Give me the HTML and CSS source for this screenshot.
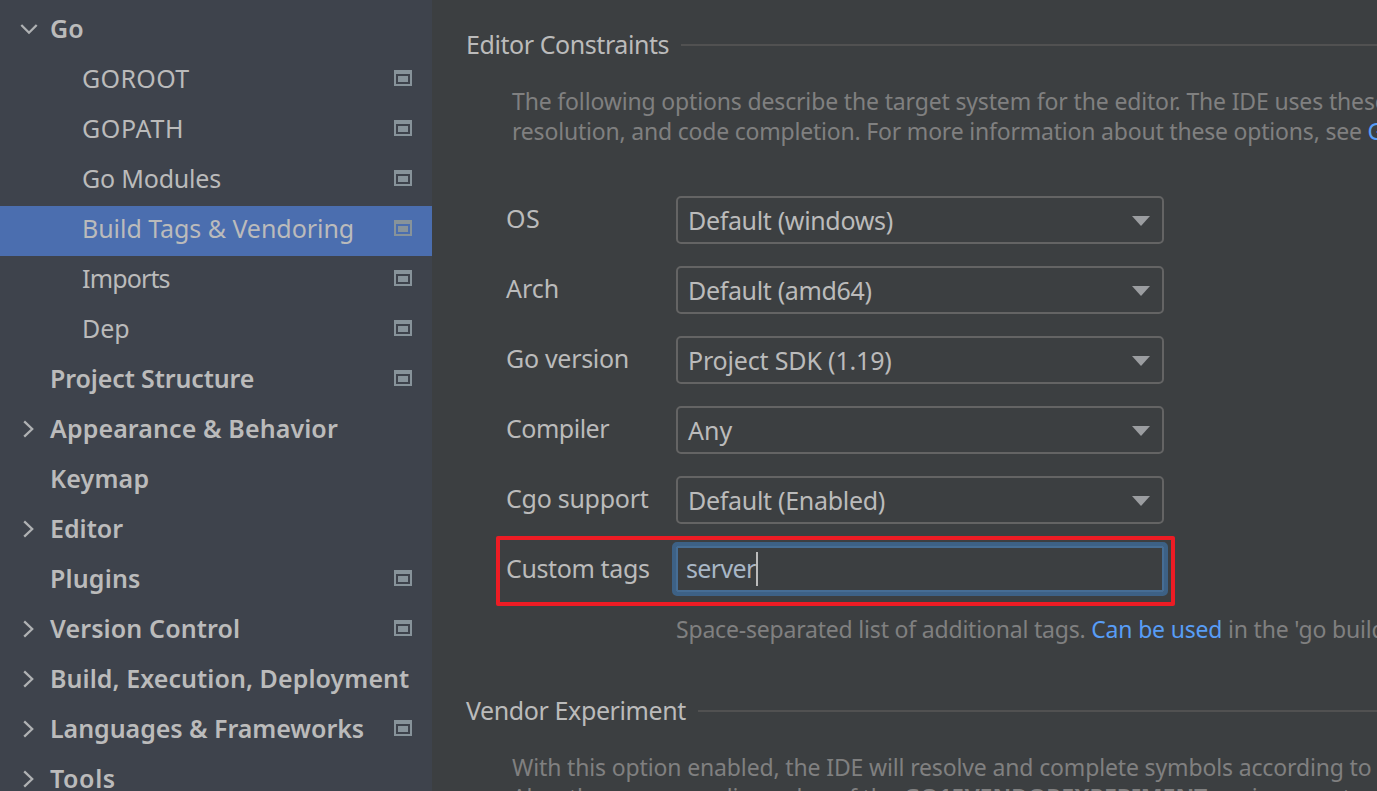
FILE: index.html
```
<!DOCTYPE html>
<html lang="en">
<head>
<meta charset="utf-8">
<title>Settings</title>
<link rel="stylesheet" href="styles.css">
</head>
<body>
<svg class="defs" aria-hidden="true">
  <symbol id="down" viewBox="0 0 24 24"><path d="M4.300 8 12 15.700 19.700 8"/></symbol>
  <symbol id="right" viewBox="0 0 24 24"><path d="M7.200 4.300 15.200 12 7.200 19.700"/></symbol>
  <symbol id="project" viewBox="0 0 18 16"><path fill-rule="evenodd" d="M0 0h18v16H0zM2 4v10h14V4zM4 6h10v6H4z"/></symbol>
</svg>
<div class="window">
  <nav class="tree">
    <div class="row group"><svg class="chevron"><use href="#down"/></svg><span class="name">Go</span></div>
    <div class="row child"><span class="name w-goroot">GOROOT</span><svg class="badge"><use href="#project"/></svg></div>
    <div class="row child"><span class="name w-gopath">GOPATH</span><svg class="badge"><use href="#project"/></svg></div>
    <div class="row child"><span class="name w-modules">Go Modules</span><svg class="badge"><use href="#project"/></svg></div>
    <div class="row child selected"><span class="name w-build">Build Tags &amp; Vendoring</span><svg class="badge"><use href="#project"/></svg></div>
    <div class="row child"><span class="name w-imports">Imports</span><svg class="badge"><use href="#project"/></svg></div>
    <div class="row child"><span class="name">Dep</span><svg class="badge"><use href="#project"/></svg></div>
    <div class="row group"><span class="chevron"></span><span class="name w-structure">Project Structure</span><svg class="badge"><use href="#project"/></svg></div>
    <div class="row group"><svg class="chevron"><use href="#right"/></svg><span class="name w-appearance">Appearance &amp; Behavior</span></div>
    <div class="row group"><span class="chevron"></span><span class="name w-keymap">Keymap</span></div>
    <div class="row group"><svg class="chevron"><use href="#right"/></svg><span class="name">Editor</span></div>
    <div class="row group"><span class="chevron"></span><span class="name w-plugins">Plugins</span><svg class="badge"><use href="#project"/></svg></div>
    <div class="row group"><svg class="chevron"><use href="#right"/></svg><span class="name w-version">Version Control</span><svg class="badge"><use href="#project"/></svg></div>
    <div class="row group"><svg class="chevron"><use href="#right"/></svg><span class="name w-deploy">Build, Execution, Deployment</span></div>
    <div class="row group"><svg class="chevron"><use href="#right"/></svg><span class="name w-lang">Languages &amp; Frameworks</span><svg class="badge"><use href="#project"/></svg></div>
    <div class="row group"><svg class="chevron"><use href="#right"/></svg><span class="name w-tools">Tools</span></div>
  </nav>
  <main class="page">
    <h2 class="heading"><span class="h-editor">Editor Constraints</span></h2>
    <p class="note"><span class="n-one">The following options describe the target system for the editor. The IDE uses these</span><br><span class="n-two">resolution, and code completion. For more information about these options, see <a class="link">Go</a></span></p>
    <form class="form">
      <div class="field"><label class="l-os">OS</label><div class="combo"><span class="c-os">Default (windows)</span><i class="arrow"></i></div></div>
      <div class="field"><label>Arch</label><div class="combo"><span class="c-arch">Default (amd64)</span><i class="arrow"></i></div></div>
      <div class="field"><label class="l-version">Go version</label><div class="combo"><span class="c-sdk">Project SDK (1.19)</span><i class="arrow"></i></div></div>
      <div class="field"><label class="l-compiler">Compiler</label><div class="combo"><span>Any</span><i class="arrow"></i></div></div>
      <div class="field"><label class="l-cgo">Cgo support</label><div class="combo"><span class="c-cgo">Default (Enabled)</span><i class="arrow"></i></div></div>
      <div class="field marked"><label class="l-custom">Custom tags</label><div class="input"><span class="c-server">server</span><i class="caret"></i></div></div>
    </form>
    <p class="hint">Space-separated list of additional tags. <a class="link">Can be used</a> in the 'go build'</p>
    <h2 class="heading second"><span class="h-vendor">Vendor Experiment</span></h2>
    <p class="note last"><span class="n-three">With this option enabled, the IDE will resolve and complete symbols according to</span><br><span class="n-four">Also, the corresponding value of the <b>GO15VENDOREXPERIMENT</b> environment</span></p>
  </main>
</div>
</body>
</html>
```
FILE: styles.css
```
*, *::before, *::after { box-sizing: border-box; }
body { margin: 0; background: #3c3f41; color: #bbbbbb; font-family: "Noto Sans", sans-serif; font-size: 25px; overflow: hidden; }
.defs { display: none; }
.window { display: grid; grid-template-columns: 432px 1fr; height: 791px; overflow: hidden; }
.tree { background: #3e434c; padding-top: 6px; overflow: hidden; }
.row { display: flex; align-items: center; height: 50px; padding-right: 20px; white-space: nowrap; }
.name { line-height: 44px; height: 50px; }
.group { padding-left: 17px; font-weight: 600; }
.child { padding-left: 82px; }
.selected { background: #4b6eaf; }
.chevron { width: 24px; height: 24px; margin: 0 9px 4px 0; flex: none; fill: none; stroke: #afb1b3; stroke-width: 2.300; }
.badge { width: 18px; height: 16px; margin: 0 1px 6px auto; flex: none; fill: #87939a; }
.child .badge, .group .badge { margin-right: 0; }
.page { overflow: hidden; white-space: nowrap; }

/* Tracking of the tree labels */
.w-goroot { letter-spacing: 0.35px; }
.w-gopath { letter-spacing: 0.65px; }
.w-modules { letter-spacing: -0.2px; }
.w-build { letter-spacing: -0.05px; }
.w-imports { letter-spacing: -0.85px; }
.w-structure { letter-spacing: -0.12px; }
.w-appearance { letter-spacing: 0.1px; }
.w-keymap { letter-spacing: 0.15px; }
.w-plugins { letter-spacing: 0.15px; }
.w-version { letter-spacing: 0.13px; }
.w-deploy { letter-spacing: 0.07px; }
.w-lang { letter-spacing: -0.05px; }
.w-tools { letter-spacing: 0.6px; }

.heading { display: flex; align-items: center; gap: 12px; height: 34px; margin: 28px 0 0 34px; font-size: 25px; font-weight: 400; line-height: 32px; }
.heading span { height: 34px; }
.heading::after { content: ""; flex: 1; height: 2px; background: #515151; }
.h-editor { letter-spacing: -0.43px; }
.h-vendor { letter-spacing: -0.4px; }
.note { margin: 24px 0 0 80px; font-size: 23px; line-height: 30px; color: #808080; }
.n-one { letter-spacing: -0.155px; }
.n-two { letter-spacing: -0.2px; }
.n-three { letter-spacing: -0.145px; }
.n-four { letter-spacing: -0.13px; }
.n-four b { letter-spacing: 0; }
.link { color: #589df6; }
.form { display: grid; gap: 22px; margin: 50px 0 0 64px; }
.field { position: relative; display: grid; grid-template-columns: 180px 488px; height: 48px; line-height: 48px; }
.field label { padding-left: 10px; line-height: 45px; }
.l-os { letter-spacing: 0.4px; }
.l-version { letter-spacing: -0.3px; }
.l-compiler { letter-spacing: -0.5px; }
.l-cgo { letter-spacing: -0.27px; }
.l-custom { letter-spacing: -0.38px; }
.combo { display: flex; align-items: center; justify-content: space-between; height: 48px; padding: 0 12px 0 10px; border: 2px solid #646464; border-radius: 5px; }
.c-os, .c-arch { letter-spacing: -0.34px; }
.c-sdk { letter-spacing: -0.17px; }
.c-cgo { letter-spacing: -0.3px; }
.arrow { width: 18px; height: 10px; margin-top: 2px; background: #9b9da0; clip-path: polygon(0 0, 100% 0, 50% 100%); }
.input { display: flex; align-items: center; height: 46px; padding-left: 8px; border: 2px solid #466d94; outline: 4px solid #3d6185; border-radius: 1px; color: #a9b7c6; line-height: 40px; }
.c-server { height: 42px; letter-spacing: -0.65px; }
.caret { width: 2px; height: 34px; background: #bbbbbb; }
.marked::before { content: ""; position: absolute; left: 0; top: -10px; width: 679px; height: 70px; border: 4px solid #ed1c24; border-radius: 2px; }
.hint { margin: 20px 0 0 244px; font-size: 23px; line-height: 30px; letter-spacing: -0.195px; color: #808080; }
.second { margin-top: 50px; }
.last { margin-top: 24px; }
```
